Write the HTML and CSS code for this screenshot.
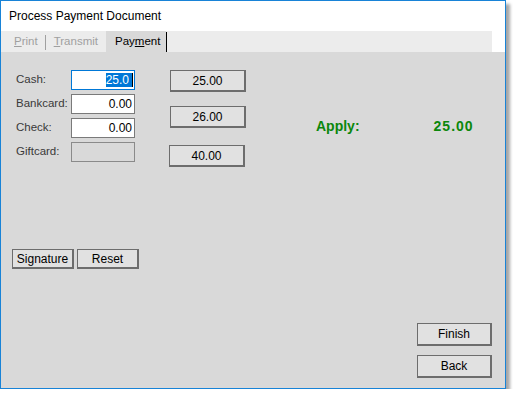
FILE: index.html
```html
<!doctype html>
<html>
<head>
  <meta charset="utf-8">
  <title>Process Payment Document</title>
  <link rel="stylesheet" href="styles.css">
</head>
<body>
  <div class="window">
    <div class="titlebar">Process Payment Document</div>

    <div class="tabs">
      <span class="tab disabled"><u>P</u>rint</span>
      <span class="tab-sep"></span>
      <span class="tab disabled"><u>T</u>ransmit</span>
      <span class="tab active">Pay<u>m</u>ent</span>
      <span class="tab-sep dark"></span>
    </div>

    <div class="content">
      <div class="top">
        <!-- Tender fields -->
        <div class="fields">
          <span class="label">Cash:</span>
          <div class="field focused"><span class="selected">25.0</span><span class="caret"></span></div>
          <span class="label">Bankcard:</span>
          <div class="field">0.00</div>
          <span class="label">Check:</span>
          <div class="field">0.00</div>
          <span class="label">Giftcard:</span>
          <div class="field disabled"></div>
        </div>

        <!-- Quick amounts -->
        <div class="quick">
          <button class="btn amount">25.00</button>
          <button class="btn amount second">26.00</button>
          <button class="btn amount third">40.00</button>
        </div>

        <div class="apply">
          <span>Apply:</span>
          <span class="apply-value">25.00</span>
        </div>
      </div>

      <div class="actions">
        <button class="btn small">Signature</button>
        <button class="btn small">Reset</button>
      </div>

      <div class="nav">
        <button class="btn wide">Finish</button>
        <button class="btn wide">Back</button>
      </div>
    </div>
  </div>
</body>
</html>
```

FILE: styles.css
```css
body {
  margin: 0;
  background-color: #ffffff;
  font-family: "Liberation Sans", Arial, sans-serif;
  font-size: 11px;
  color: #000000;
}
.window {
  width: 504px;
  height: 387px;
  border: 1px solid #1883d7;
  display: flex;
  flex-direction: column;
  box-shadow: 4px 4px 3px rgba(0, 0, 0, 0.35);
}
.titlebar {
  height: 30px;
  line-height: 30px;
  padding-left: 8px;
  background-color: #ffffff;
  font-size: 12px;
}
.tabs {
  height: 21px;
  margin-right: 13px;
  background-color: #ececec;
  display: flex;
  align-items: stretch;
  padding-left: 7px;
  font-size: 11.5px;
}
.tab {
  line-height: 21px;
  padding: 0 6px;
}
.tab.disabled {
  color: #a0a0a0;
}
.tab.active {
  background-color: #d9d9d9;
  color: #000000;
  margin-left: 2px;
  padding: 0 6px 0 9px;
}
.tab-sep {
  width: 1px;
  margin: 4px 2px 2px 1px;
  background-color: #a0a0a0;
}
.tab-sep.dark {
  margin: 1px 0 0;
  background-color: #000000;
}

/* Payment page */
.content {
  flex: 1;
  background-color: #d9d9d9;
  display: flex;
  flex-direction: column;
  padding: 18px 13px 0 0;
}
.top {
  display: flex;
  align-items: flex-start;
}
.fields {
  display: grid;
  grid-template-columns: 55px 64px;
  grid-auto-rows: 20px;
  row-gap: 4px;
  margin-left: 15px;
  font-size: 12px;
}
.label {
  color: #3a3a3a;
  font-size: 11.5px;
  line-height: 18px;
}
.field {
  background-color: #ffffff;
  border: 1px solid #7a7a7a;
  text-align: right;
  line-height: 18px;
  padding-right: 2px;
  white-space: nowrap;
}
.field.focused {
  border-color: #0078d7;
  padding-right: 1px;
}
.field.disabled {
  background-color: #d9d9d9;
  border-color: #8a8a8a;
}
.selected {
  background-color: #0078d7;
  color: #ffffff;
}
.caret {
  display: inline-block;
  width: 3px;
  height: 14px;
  vertical-align: -3px;
  background-color: #0078d7;
  border-right: 1px solid #000000;
}
.btn {
  font-family: "Liberation Sans", Arial, sans-serif;
  font-size: 12px;
  color: #000000;
  background-color: #e1e1e1;
  border: 1px solid #6d6d6d;
  border-right-width: 2px;
  border-bottom-width: 2px;
  padding: 0;
}
.quick {
  display: flex;
  flex-direction: column;
  margin-left: 35px;
}
.amount {
  width: 76px;
  height: 22px;
}
.amount.second {
  margin-top: 14px;
}
.amount.third {
  margin-top: 17px;
  margin-left: -1px;
}
.apply {
  display: flex;
  gap: 74px;
  margin: 48px 0 0 70px;
  color: #0b870b;
  font-size: 14px;
  font-weight: bold;
}
.apply-value {
  letter-spacing: 1px;
}
.actions {
  display: flex;
  gap: 3px;
  margin: 82px 0 0 11px;
}
.small {
  width: 62px;
  height: 20px;
}
.nav {
  display: flex;
  flex-direction: column;
  align-items: flex-end;
  gap: 9px;
  margin-top: 54px;
}
.wide {
  width: 75px;
  height: 23px;
}
```
